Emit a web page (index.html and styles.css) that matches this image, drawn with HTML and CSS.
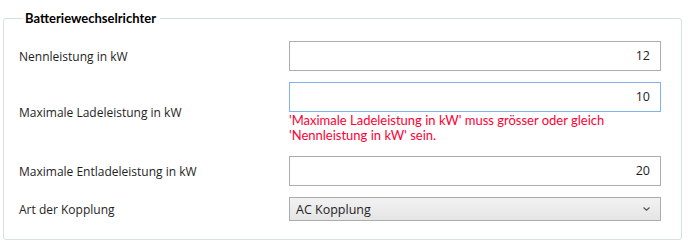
FILE: index.html
```html
<!DOCTYPE html>
<html lang="de">
<head>
    <meta charset="UTF-8">
    <title>Batteriewechselrichter</title>
    <link rel="stylesheet" href="styles.css">
</head>
<body>
    <fieldset class="group">
        <legend class="group-title">Batteriewechselrichter</legend>

        <div class="form-row">
            <label class="form-label">Nennleistung in kW</label>
            <div class="form-field">
                <div class="text-input">12</div>
            </div>
        </div>

        <div class="form-row">
            <label class="form-label">Maximale Ladeleistung in kW</label>
            <div class="form-field">
                <div class="text-input focused">10</div>
                <div class="error-text">'Maximale Ladeleistung in kW' muss grösser oder gleich<br>'Nennleistung in kW' sein.</div>
            </div>
        </div>

        <div class="form-row">
            <label class="form-label">Maximale Entladeleistung in kW</label>
            <div class="form-field">
                <div class="text-input">20</div>
            </div>
        </div>

        <div class="form-row">
            <label class="form-label">Art der Kopplung</label>
            <div class="form-field">
                <div class="combo">
                    <span>AC Kopplung</span>
                    <svg class="combo-arrow" width="7" height="4" viewBox="0 0 7 4">
                        <path d="M0.5 0.5 L3.5 3.2 L6.5 0.5" fill="none" stroke="#555" stroke-width="1.2"/>
                    </svg>
                </div>
            </div>
        </div>
    </fieldset>
</body>
</html>
```

FILE: styles.css
```css
body {
    margin: 0;
    background: #ffffff;
    font-family: "Open Sans", "Noto Sans", sans-serif;
    font-size: 12px;
    color: #1e1e1e;
}

.group {
    box-sizing: border-box;
    margin: 10px 0 0 3px;
    width: 679px;
    height: 230px;
    padding: 15px 20px 0 15px;
    border: 1px solid #d5dfe5;
    border-radius: 3px;
}

.group-title {
    font-family: Lato, "Open Sans", sans-serif;
    font-weight: bold;
    font-size: 13px;
    padding: 0 4px 0 2px;
    margin-left: 4px;
    color: #000;
}

.form-row {
    display: flex;
    align-items: center;
    margin-bottom: 11px;
}

.form-row:nth-child(3) {
    margin-bottom: 13px;
}

.form-label {
    width: 270px;
}

.form-field {
    width: 372px;
}

.text-input {
    height: 28px;
    line-height: 28px;
    border: 1px solid #abadb3;
    text-align: right;
    padding-right: 10px;
    font-size: 12.5px;
}

.text-input.focused {
    border-color: #7eb4ea;
}

.error-text {
    font-family: Lato, "Open Sans", sans-serif;
    color: #ff0033;
    margin-top: 1px;
    line-height: 15px;
    font-size: 13px;
}

.combo {
    height: 22px;
    border: 1px solid #acacac;
    background: linear-gradient(#f2f2f2, #e5e5e5);
    display: flex;
    align-items: center;
    justify-content: space-between;
    padding: 0 10px 0 6px;
    font-size: 12.5px;
}

.combo-arrow {
    display: block;
}
```
